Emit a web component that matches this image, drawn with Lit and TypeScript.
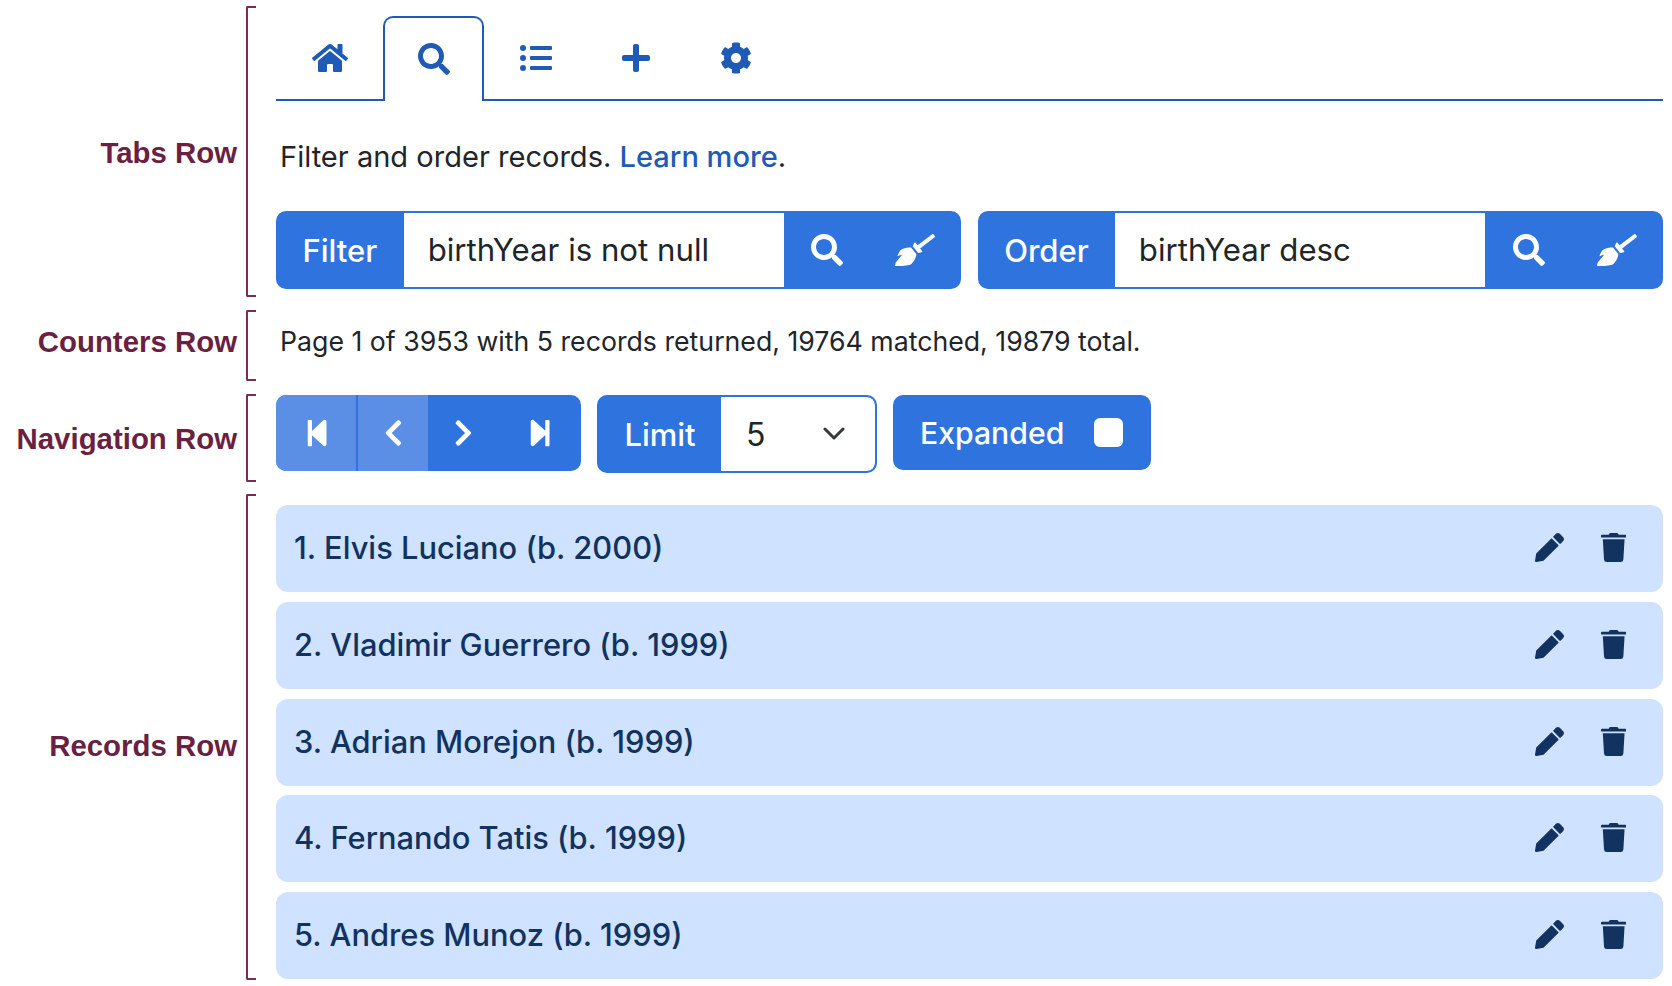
import {LitElement, html, css, svg} from 'lit';
import {customElement} from 'lit/decorators.js';

const icons: Record<string, [number, string]> = {
  home: [576, 'M280.37 148.26L96 300.11V464a16 16 0 0 0 16 16l112.06-.29a16 16 0 0 0 15.92-16V368a16 16 0 0 1 16-16h64a16 16 0 0 1 16 16v95.64a16 16 0 0 0 16 16.05L464 480a16 16 0 0 0 16-16V300L295.67 148.26a12.19 12.19 0 0 0-15.3 0zM571.6 251.47L488 182.56V44.05a12 12 0 0 0-12-12h-56a12 12 0 0 0-12 12v72.61L318.47 43a48 48 0 0 0-61 0L4.34 251.47a12 12 0 0 0-1.6 16.9l25.5 31A12 12 0 0 0 45.15 301l235.22-193.74a12.19 12.19 0 0 1 15.3 0L530.9 301a12 12 0 0 0 16.9-1.6l25.5-31a12 12 0 0 0-1.7-16.93z'],
  search: [512, 'M505 442.7L405.3 343c-4.5-4.5-10.6-7-17-7H372c27.6-35.3 44-79.7 44-128C416 93.1 322.9 0 208 0S0 93.1 0 208s93.1 208 208 208c48.3 0 92.7-16.4 128-44v16.3c0 6.4 2.5 12.5 7 17l99.7 99.7c9.4 9.4 24.6 9.4 33.9 0l28.3-28.3c9.4-9.4 9.4-24.6.1-34zM208 336c-70.7 0-128-57.2-128-128 0-70.7 57.2-128 128-128 70.7 0 128 57.2 128 128 0 70.7-57.2 128-128 128z'],
  list: [512, 'M48 48a48 48 0 1 0 48 48 48 48 0 0 0-48-48zm0 160a48 48 0 1 0 48 48 48 48 0 0 0-48-48zm0 160a48 48 0 1 0 48 48 48 48 0 0 0-48-48zm448 16H176a16 16 0 0 0-16 16v32a16 16 0 0 0 16 16h320a16 16 0 0 0 16-16v-32a16 16 0 0 0-16-16zm0-320H176a16 16 0 0 0-16 16v32a16 16 0 0 0 16 16h320a16 16 0 0 0 16-16V80a16 16 0 0 0-16-16zm0 160H176a16 16 0 0 0-16 16v32a16 16 0 0 0 16 16h320a16 16 0 0 0 16-16v-32a16 16 0 0 0-16-16z'],
  plus: [448, 'M416 208H272V64c0-17.67-14.33-32-32-32h-32c-17.67 0-32 14.33-32 32v144H32c-17.67 0-32 14.33-32 32v32c0 17.67 14.33 32 32 32h144v144c0 17.67 14.33 32 32 32h32c17.67 0 32-14.33 32-32V304h144c17.67 0 32-14.33 32-32v-32c0-17.67-14.33-32-32-32z'],
  cog: [512, 'M487.4 315.7l-42.6-24.6c4.3-23.2 4.3-47 0-70.2l42.6-24.6c4.9-2.8 7.1-8.6 5.5-14-11.1-35.6-30-67.8-54.7-94.6-3.8-4.1-10-5.1-14.8-2.3L380.8 110c-17.9-15.4-38.5-27.3-60.8-35.1V25.8c0-5.6-3.9-10.5-9.4-11.7-36.7-8.2-74.3-7.8-109.2 0-5.5 1.2-9.4 6.1-9.4 11.7V75c-22.2 7.9-42.8 19.8-60.8 35.1L88.7 85.5c-4.9-2.8-11-1.9-14.8 2.3-24.7 26.7-43.6 58.9-54.7 94.6-1.7 5.4.6 11.2 5.5 14L67.3 221c-4.3 23.2-4.3 47 0 70.2l-42.6 24.6c-4.9 2.8-7.1 8.6-5.5 14 11.1 35.6 30 67.8 54.7 94.6 3.8 4.1 10 5.1 14.8 2.3l42.6-24.6c17.9 15.4 38.5 27.3 60.8 35.1v49.2c0 5.6 3.9 10.5 9.4 11.7 36.7 8.2 74.3 7.8 109.2 0 5.5-1.2 9.4-6.1 9.4-11.7v-49.2c22.2-7.9 42.8-19.8 60.8-35.1l42.6 24.6c4.9 2.8 11 1.9 14.8-2.3 24.7-26.7 43.6-58.9 54.7-94.6 1.5-5.5-.7-11.3-5.6-14.1zM256 336c-44.1 0-80-35.9-80-80s35.9-80 80-80 80 35.9 80 80-35.9 80-80 80z'],
  broom: [640, 'M256.47 216.77l86.73 109.18s-16.6 102.36-76.57 150.12C206.66 523.83 0 510.19 0 510.19s3.8-23.14 11-55.43l94.62-112.17c3.97-4.7-.87-11.62-6.65-9.5l-60.4 22.09c14.44-41.66 32.72-80.04 54.6-97.47 59.97-47.76 163.3-40.94 163.3-40.94zM636.53 31.03l-19.86-25c-5.49-6.9-15.52-8.05-22.41-2.56l-232.48 177.8-34.14-42.97c-5.09-6.41-15.14-5.21-18.59 2.21l-25.33 54.55 86.73 109.18 58.8-12.45c8-1.69 11.42-11.2 6.34-17.6l-34.09-42.92 232.48-177.8c6.89-5.48 8.04-15.53 2.55-22.44z'],
  first: [448, 'M64 468V44c0-6.6 5.4-12 12-12h48c6.6 0 12 5.4 12 12v176.4l195.5-181C352.1 22.3 384 36.6 384 64v384c0 27.4-31.9 41.7-52.5 24.6L136 292.7V468c0 6.6-5.4 12-12 12H76c-6.6 0-12-5.4-12-12z'],
  last: [448, 'M384 44v424c0 6.6-5.4 12-12 12h-48c-6.6 0-12-5.4-12-12V291.6l-195.5 181C95.9 489.7 64 475.4 64 448V64c0-27.4 31.9-41.7 52.5-24.6L312 219.3V44c0-6.6 5.4-12 12-12h48c6.6 0 12 5.4 12 12z'],
  prev: [320, 'M34.52 239.03L228.87 44.69c9.37-9.37 24.57-9.37 33.94 0l22.67 22.67c9.36 9.36 9.37 24.52.04 33.9L131.49 256l154.02 154.75c9.34 9.38 9.32 24.54-.04 33.9l-22.67 22.67c-9.37 9.37-24.57 9.37-33.94 0L34.52 272.97c-9.37-9.37-9.37-24.57 0-33.94z'],
  next: [320, 'M285.476 272.971L91.132 467.314c-9.373 9.373-24.569 9.373-33.941 0l-22.667-22.667c-9.357-9.357-9.375-24.522-.04-33.901L188.505 256 34.484 101.255c-9.335-9.379-9.317-24.544.04-33.901l22.667-22.667c9.373-9.373 24.569-9.373 33.941 0L285.475 239.03c9.373 9.372 9.373 24.568.001 33.941z'],
  pencil: [512, 'M497.9 142.1l-46.1 46.1c-4.7 4.7-12.3 4.7-17 0l-111-111c-4.7-4.7-4.7-12.3 0-17l46.1-46.1c18.7-18.7 49.1-18.7 67.9 0l60.1 60.1c18.8 18.7 18.8 49.1 0 67.9zM284.2 99.8L21.6 362.4.4 483.9c-2.9 16.4 11.4 30.6 27.8 27.8l121.5-21.3 262.6-262.6c4.7-4.7 4.7-12.3 0-17l-111-111c-4.8-4.7-12.4-4.7-17.1 0z'],
  trash: [448, 'M432 32H312l-9.4-18.7A24 24 0 0 0 281.1 0H166.8a23.72 23.72 0 0 0-21.4 13.3L136 32H16A16 16 0 0 0 0 48v16a16 16 0 0 0 16 16h416a16 16 0 0 0 16-16V48a16 16 0 0 0-16-16zM53.2 467a48 48 0 0 0 47.9 45h245.8a48 48 0 0 0 47.9-45L416 112H32z'],
};

const icon = (name: string, size: number) => {
  const [w, d] = icons[name];
  return html`<svg class="icon" viewBox="0 0 ${w} 512" height=${size} width=${size * w / 512}>${svg`<path fill="currentColor" d=${d}></path>`}</svg>`;
};

const records = [
  '1. Elvis Luciano (b. 2000)',
  '2. Vladimir Guerrero (b. 1999)',
  '3. Adrian Morejon (b. 1999)',
  '4. Fernando Tatis (b. 1999)',
  '5. Andres Munoz (b. 1999)',
];

@customElement('app-root')
export class AppRoot extends LitElement {
  static override styles = css`
    :host {
      display: block;
      width: 1672px;
      height: 986px;
      background: #fff;
      font-family: Inter, "Noto Sans", sans-serif;
      color: #212529;
      overflow: hidden;
    }
    .page {
      display: flex;
      flex-direction: column;
      padding-top: 6px;
    }
    .row {
      display: flex;
      align-items: stretch;
    }
    .label {
      width: 237px;
      flex: none;
      display: flex;
      align-items: center;
      justify-content: flex-end;
      font-family: "Liberation Sans", Arial, sans-serif;
      font-weight: 700;
      font-size: 29.4px;
      color: #6b1f42;
    }
    .bracket {
      flex: none;
      box-sizing: border-box;
      width: 10px;
      margin: 0 20px 0 9px;
      border: 2px solid #7a2d52;
      border-right: 0;
      border-radius: 2px 0 0 2px;
    }
    .content {
      width: 1387px;
      flex: none;
    }

    .row-tabs { height: 291px; }
    .row-tabs .label { padding-top: 2px; }
    .row-tabs .content { padding-top: 10px; }
    .row-counters { height: 71px; margin-top: 13px; }
    .row-counters .label { padding-bottom: 8px; }
    .row-nav { height: 88px; margin-top: 13px; }
    .row-nav .label { padding-top: 2px; }
    .row-nav .content { padding-top: 1px; }
    .row-records { height: 486px; margin-top: 12px; }
    .row-records .label { padding-top: 18px; }
    .row-records .content { padding-top: 11px; }

    .tabs {
      display: flex;
      box-sizing: border-box;
      height: 85px;
      border-bottom: 2px solid #1f5bb5;
      color: #1f5bb5;
    }
    .tab {
      box-sizing: border-box;
      width: 100px;
      height: 85px;
      display: flex;
      align-items: center;
      justify-content: center;
      padding-bottom: 2px;
    }
    .tab:first-child { width: 107px; }
    .tab.active + .tab { width: 102px; padding-left: 2px; }
    .tab.active {
      width: 101px;
      border: 2px solid #1f5bb5;
      border-bottom: 0;
      border-radius: 10px 10px 0 0;
      background: #fff;
    }
    .intro {
      font-size: 29.05px;
      line-height: 36px;
      margin: 38px 0 0 4px;
    }
    .intro a { color: #1f5bb5; text-decoration: none; font-weight: 500; }

    .filters {
      display: flex;
      gap: 17px;
      margin-top: 36px;
    }
    .group {
      display: flex;
      height: 78px;
      box-sizing: border-box;
      border: 2px solid #2f74de;
      border-radius: 10px;
      overflow: hidden;
      background: #2f74de;
    }
    .filters .group.filter { width: 685px; }
    .filters .group.order { width: 685px; }
    .addon {
      display: flex;
      align-items: center;
      justify-content: center;
      color: #fff;
      font-size: 31px;
      font-weight: 500;
    }
    .filter .addon { width: 124px; padding-right: 2px; }
    .order .addon { width: 133px; padding-right: 2px; }
    .field {
      display: flex;
      align-items: center;
      background: #fff;
      font-size: 31.2px;
      padding-left: 24px;
      box-sizing: border-box;
    }
    .filter .field { width: 381px; }
    .order .field { width: 371px; }
    .btn {
      display: flex;
      align-items: center;
      justify-content: center;
      width: 88px;
      color: #fff;
    }

    .counters {
      font-size: 26.7px;
      line-height: 32px;
      margin: 15px 0 0 4px;
    }

    .nav {
      display: flex;
      gap: 16px;
    }
    .pager {
      display: flex;
      height: 76px;
      border-radius: 10px;
      overflow: hidden;
      background: #2f74de;
      color: #fff;
    }
    .page-btn {
      box-sizing: border-box;
      width: 71px;
      display: flex;
      align-items: center;
      justify-content: center;
    }
    .page-btn:last-child { width: 82px; }
    .page-btn.off { background: #5a8fe5; }
    .page-btn.off:first-child { width: 82px; padding-left: 2px; border-right: 2px solid #2f74de; }
    .page-btn.off + .off { width: 70px; }
    .limit { width: 280px; height: 78px; }
    .limit .addon { width: 122px; }
    .select {
      flex: 1;
      display: flex;
      align-items: center;
      justify-content: space-between;
      background: #fff;
      font-size: 32px;
      padding: 0 30px 0 25px;
      border-radius: 0 8px 8px 0;
    }
    .select svg { display: block; }
    .expanded {
      display: flex;
      align-items: center;
      justify-content: space-between;
      box-sizing: border-box;
      width: 258px;
      height: 75px;
      padding: 0 28px 0 27px;
      background: #2f74de;
      border-radius: 10px;
      color: #fff;
      font-size: 30.2px;
      font-weight: 500;
    }
    .check {
      width: 29px;
      height: 29px;
      background: #fff;
      border-radius: 6px;
    }

    .records {
      display: flex;
      flex-direction: column;
      gap: 9.8px;
    }
    .record {
      display: flex;
      align-items: center;
      height: 87px;
      box-sizing: border-box;
      padding: 0 37px 2px 18px;
      background: #cfe2ff;
      border-radius: 12px;
      color: #12335f;
      font-size: 30.85px;
      font-weight: 500;
    }
    .record .name { flex: 1; }
    .record .actions {
      display: flex;
      align-items: center;
      gap: 37px;
    }
    .icon { display: block; }
  `;

  private renderGroup(cls: string, label: string, value: string) {
    return html`
      <div class="group ${cls}">
        <div class="addon">${label}</div>
        <div class="field">${value}</div>
        <div class="btn">${icon('search', 32)}</div>
        <div class="btn">${icon('broom', 32)}</div>
      </div>
    `;
  }

  override render() {
    return html`
      <div class="page">
        <div class="row row-tabs">
          <div class="label">Tabs Row</div>
          <div class="bracket"></div>
          <div class="content">
            <div class="tabs">
              <div class="tab">${icon('home', 32)}</div>
              <div class="tab active">${icon('search', 32)}</div>
              <div class="tab">${icon('list', 32)}</div>
              <div class="tab">${icon('plus', 32)}</div>
              <div class="tab">${icon('cog', 32)}</div>
            </div>
            <div class="intro">Filter and order records. <a>Learn more</a>.</div>
            <div class="filters">
              ${this.renderGroup('filter', 'Filter', 'birthYear is not null')}
              ${this.renderGroup('order', 'Order', 'birthYear desc')}
            </div>
          </div>
        </div>

        <div class="row row-counters">
          <div class="label">Counters Row</div>
          <div class="bracket"></div>
          <div class="content">
            <div class="counters">Page 1 of 3953 with 5 records returned, 19764 matched, 19879 total.</div>
          </div>
        </div>

        <div class="row row-nav">
          <div class="label">Navigation Row</div>
          <div class="bracket"></div>
          <div class="content">
            <div class="nav">
              <div class="pager">
                <div class="page-btn off">${icon('first', 30)}</div>
                <div class="page-btn off">${icon('prev', 30)}</div>
                <div class="page-btn">${icon('next', 30)}</div>
                <div class="page-btn">${icon('last', 30)}</div>
              </div>
              <div class="group limit">
                <div class="addon">Limit</div>
                <div class="select">
                  <span>5</span>
                  <svg width="22" height="14" viewBox="0 0 22 14"><path d="M2 2l9 9 9-9" fill="none" stroke="#343a40" stroke-width="3" stroke-linecap="round" stroke-linejoin="round"></path></svg>
                </div>
              </div>
              <div class="expanded"><span>Expanded</span><div class="check"></div></div>
            </div>
          </div>
        </div>

        <div class="row row-records">
          <div class="label">Records Row</div>
          <div class="bracket"></div>
          <div class="content">
            <div class="records">
              ${records.map(r => html`
                <div class="record">
                  <div class="name">${r}</div>
                  <div class="actions">${icon('pencil', 29)}${icon('trash', 29)}</div>
                </div>
              `)}
            </div>
          </div>
        </div>
      </div>
    `;
  }
}

declare global {
  interface HTMLElementTagNameMap {
    'app-root': AppRoot;
  }
}
